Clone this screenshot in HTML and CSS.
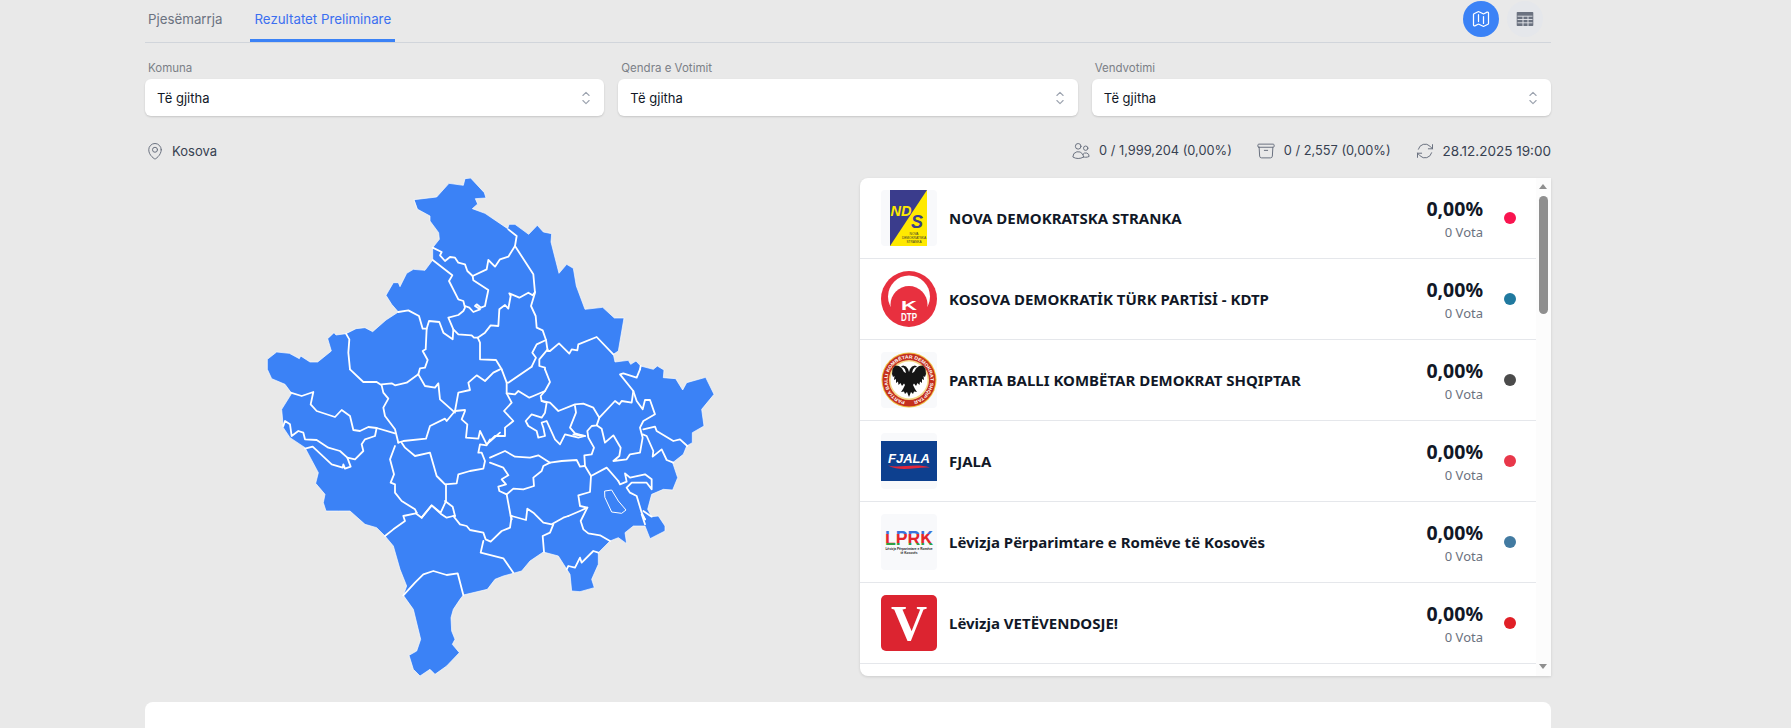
FILE: index.html
```html
<!DOCTYPE html>
<html lang="sq">
<head>
    <meta charset="UTF-8">
    <title>Rezultatet Preliminare</title>
    <link rel="stylesheet" href="styles.css">
</head>
<body>
    <div class="page">
        <div class="topbar">
            <div class="tabs">
                <div class="tab">Pjesëmarrja</div>
                <div class="tab active">Rezultatet Preliminare</div>
            </div>
            <div class="views">
                <div class="view-btn on">
                    <svg class="icon-20" viewBox="0 0 24 24"><path d="M9 6.75V15m6-6v8.25m.503 3.498 4.875-2.437c.381-.19.622-.58.622-1.006V4.82c0-.836-.88-1.38-1.628-1.006l-3.869 1.934c-.317.159-.69.159-1.006 0L9.503 3.252a1.125 1.125 0 0 0-1.006 0L3.622 5.689C3.24 5.88 3 6.27 3 6.695V19.18c0 .836.88 1.38 1.628 1.006l3.869-1.934c.317-.159.69-.159 1.006 0l4.994 2.497c.317.158.69.158 1.006 0Z"/></svg>
                </div>
                <div class="view-btn">
                    <svg class="icon-20" viewBox="0 0 20 20"><path class="solid" d="M2.5 3h15a.8.8 0 0 1 .8.8v12.4a.8.8 0 0 1-.8.8h-15a.8.8 0 0 1-.8-.8V3.800a.8.8 0 0 1 .8-.8Z"/><path class="cuts" d="M2.500 7.200h15M2.500 10.500h15M2.500 13.800h15M8 7.200V17M13 7.200V17"/></svg>
                </div>
            </div>
        </div>

        <div class="filters">
            <div class="filter">
                <label>Komuna</label>
                <div class="select">Të gjitha
                    <svg class="chevrons" viewBox="0 0 24 24"><path d="M8.250 15 12 18.750 15.750 15m-7.500-6L12 5.250 15.750 9"/></svg>
                </div>
            </div>
            <div class="filter">
                <label>Qendra e Votimit</label>
                <div class="select">Të gjitha
                    <svg class="chevrons" viewBox="0 0 24 24"><path d="M8.250 15 12 18.750 15.750 15m-7.500-6L12 5.250 15.750 9"/></svg>
                </div>
            </div>
            <div class="filter">
                <label>Vendvotimi</label>
                <div class="select">Të gjitha
                    <svg class="chevrons" viewBox="0 0 24 24"><path d="M8.250 15 12 18.750 15.750 15m-7.500-6L12 5.250 15.750 9"/></svg>
                </div>
            </div>
        </div>

        <div class="infobar">
            <div class="place">
                <svg class="icon-18" viewBox="0 0 24 24"><path d="M15 10.500a3 3 0 1 1-6 0 3 3 0 0 1 6 0Z"/><path d="M19.500 10.500c0 7.142-7.500 11.250-7.500 11.250S4.500 17.642 4.500 10.500a7.500 7.500 0 1 1 15 0Z"/></svg>
                Kosova
            </div>
            <div class="stats">
                <div class="stat">
                    <svg class="icon-18" viewBox="0 0 24 24"><path d="M15 19.128a9.380 9.380 0 0 0 2.625.372 9.337 9.337 0 0 0 4.121-.952 4.125 4.125 0 0 0-7.533-2.493M15 19.128v-.003c0-1.113-.285-2.160-.786-3.070M15 19.128v.106A12.318 12.318 0 0 1 8.624 21c-2.331 0-4.512-.645-6.374-1.766l-.001-.109a6.375 6.375 0 0 1 11.964-3.070M12 6.375a3.375 3.375 0 1 1-6.750 0 3.375 3.375 0 0 1 6.750 0Zm8.250 2.250a2.625 2.625 0 1 1-5.250 0 2.625 2.625 0 0 1 5.250 0Z"/></svg>
                    0 / 1,999,204 (0,00%)
                </div>
                <div class="stat">
                    <svg class="icon-18" viewBox="0 0 24 24"><path d="m20.250 7.500-.625 10.632a2.250 2.250 0 0 1-2.247 2.118H6.622a2.250 2.250 0 0 1-2.247-2.118L3.750 7.500M10 11.250h4M3.375 7.500h17.250c.621 0 1.125-.504 1.125-1.125v-1.500c0-.621-.504-1.125-1.125-1.125H3.375c-.621 0-1.125.504-1.125 1.125v1.500c0 .621.504 1.125 1.125 1.125Z"/></svg>
                    0 / 2,557 (0,00%)
                </div>
                <div class="stat date">
                    <svg class="icon-18" viewBox="0 0 24 24"><path d="M16.023 9.348h4.992v-.001M2.985 19.644v-4.992m0 0h4.992m-4.993 0 3.181 3.183a8.250 8.250 0 0 0 13.803-3.700M4.031 9.865a8.250 8.250 0 0 1 13.803-3.700l3.181 3.182m0-4.991v4.990"/></svg>
                    28.12.2025 19:00
                </div>
            </div>
        </div>

        <div class="content">
            <div class="map-cell">
                <svg class="map" viewBox="0 26 1440 1494">
                    <path class="land" d="M493 91L560 83L597 42L640 48L645 28L662 26L703 70L708 86L676 88L683 104L667 118L705 132L773 178L777 165L795 165L836 195L862 168L880 188L905 193L903 218L927 312L950 285L970 297L979 350L1005 420L1058 414L1093 446L1122 446L1105 545L1090 555L1095 578L1135 573L1142 585L1158 575L1172 590L1210 600L1222 590L1242 602L1240 625L1277 628L1298 662L1310 640L1367 624L1392 675L1355 720L1362 770L1327 790L1327 820L1310 830L1300 855L1268 880L1283 925L1268 962L1240 960L1205 975L1193 1020L1205 1042L1225 1040L1245 1070L1245 1085L1200 1108L1185 1070L1150 1070L1125 1090L1130 1123L1105 1105L1080 1115L1045 1150L1045 1185L1025 1230L1033 1255L990 1267L965 1265L960 1215L925 1160L880 1148L840 1175L815 1205L760 1220L735 1230L712 1260L640 1277L630 1290L610 1320L603 1345L605 1385L615 1410L607 1425L628 1450L590 1490L555 1515L540 1500L510 1520L490 1500L477 1458L500 1445L512 1410L490 1320L460 1278L470 1250L450 1200L430 1130L405 1100L380 1075L345 1065L300 1025L265 1025L228 1025L220 1000L225 975L197 942L205 910L165 835L120 805L100 775L95 720L125 672L105 645L65 628L52 600L52 570L80 548L118 552L148 568L152 560L180 578L203 578L244 545L233 508L252 490L258 497L288 493L318 478L345 475L368 487L408 452L445 428L425 405L408 378L430 340L445 340L450 352L470 312L490 300L525 303L548 272L548 235L568 210L566 190L540 155L540 140L503 120Z"/>
                    <g class="borders">
                        <polyline points="548,235 575,248 570,258 585,275 600,263 615,265 625,280 645,285 652,305 668,320 710,300 715,272 735,292 750,270 775,262 795,230 800,200 775,180"/>
                        <polyline points="795,230 850,315 855,370 843,410 857,440 860,475 878,483 888,512 893,545 900,545 927,522 958,553 965,540 982,543 985,525 1040,503 1090,555"/>
                        <polyline points="445,428 475,423 507,440 518,478 530,478 537,455 568,458 580,490 608,510 610,480 595,445 625,437 640,425 645,415 640,395 625,390 597,335 607,318 548,272"/>
                        <polyline points="668,320 670,333 715,362 708,395 705,410 693,415 680,405 675,410 690,420 670,428 658,415 645,410"/>
                        <polyline points="610,480 625,495 665,498 672,505 683,505 705,490 722,468 745,470 748,420 765,407 775,418 782,380 778,372 808,385 835,370 848,378 855,368"/>
                        <polyline points="683,505 690,520 690,570 738,572 755,600"/>
                        <polyline points="845,592 858,565 847,550 860,525 888,512"/>
                        <polyline points="885,600 885,595 868,590 868,570 893,540"/>
                        <polyline points="530,478 527,540 518,545 533,572 525,595 510,597 505,615"/>
                        <polyline points="288,493 298,510 295,550 300,600"/>
                        <polyline points="1170,600 1172,590"/>
                    </g>
                    <g class="borders" transform="translate(30 600)">
                        <polyline points="92,70 125,80 160,68 152,105 170,125 225,143 245,122 270,140 280,182 300,185 325,173 350,176 405,192"/>
                        <polyline points="350,176 345,200 315,210 305,225 310,245 285,270 262,265 240,245 205,235 170,212 135,210 130,190 115,185 95,200 90,165 75,155 70,170"/>
                        <polyline points="135,238 158,232 215,285 248,295 250,285 255,298 272,292 262,265"/>
                        <polyline points="270,0 310,38 350,38 365,48 370,70 385,88 370,115 375,140 405,180 415,220"/>
                        <polyline points="365,45 395,42 405,48 440,40 475,15 495,50 525,55 535,42 540,90 585,130"/>
                        <polyline points="415,220 430,215 498,208 510,170 555,148 560,155 585,125 615,122"/>
                        <polyline points="425,220 435,235 465,260 510,250 530,320 545,335 555,345 590,342 595,315 630,305 670,298 675,275 665,250 655,250 660,225 680,228 690,210"/>
                        <polyline points="405,230 390,270 402,315 392,340 405,345 405,370 425,395 465,420 470,430"/>
                        <polyline points="558,345 558,395 542,430 515,408 485,445"/>
                        <polyline points="555,395 578,412 585,440"/>
                        <polyline points="585,125 595,70 630,62 625,40 650,18 675,35 700,10 720,0"/>
                        <polyline points="615,125 605,150 622,165 618,205 655,208 660,185 680,225 720,190"/>
                    </g>
                    <g class="borders" transform="translate(720 600)">
                        <polyline points="35,0 50,40 55,40 125,-8"/>
                        <polyline points="165,0 180,38 165,65 130,80 118,85 85,65 75,75 50,72"/>
                        <polyline points="50,40 50,72 65,100 42,125 70,155 45,175 45,200 15,200 0,215"/>
                        <polyline points="165,65 152,80 155,95 170,100 165,130 155,145 125,135 107,155 115,170 140,185 145,205 165,200 160,175 155,160 170,155 195,210 210,225 225,195 265,205 285,200 250,195"/>
                        <polyline points="155,95 180,100 205,125 255,105 280,103 310,115 328,145 375,95 388,105 395,95 425,100 430,65 390,15 400,12 440,25 450,0"/>
                        <polyline points="255,110 258,130 240,175 255,192 285,200"/>
                        <polyline points="328,145 320,168 305,170 292,185 295,205 312,235 305,255 283,258 285,290 303,320 350,295 385,335"/>
                        <polyline points="320,168 335,178 345,220 370,198 392,235 388,260 370,275 410,270 420,255 450,250 458,205 450,175 460,155 495,135 480,92 465,92 458,120 440,95 430,65"/>
                        <polyline points="458,195 470,200 490,245 488,262 515,240 530,272 550,280"/>
                        <polyline points="460,180 495,172 500,185 550,215 570,210 592,230"/>
                        <polyline points="0,265 45,245 75,262 120,265 145,258 180,280 215,275 260,272 270,292 283,290"/>
                        <polyline points="180,280 160,290 155,305 130,325 132,350 100,360 70,358 50,375 28,365 25,352 48,345 35,330 55,318 40,295 0,280"/>
                        <polyline points="50,375 62,440 65,450"/>
                        <polyline points="303,320 300,368 265,378 270,410 292,415 270,425 235,440"/>
                        <polyline points="385,335 390,345 410,337 405,312 420,325 465,315 485,330 485,360 470,340 425,340 410,355 420,370 440,380 455,430 465,450"/>
                        <polygon class="thin" points="345,365 365,362 385,395 408,422 395,432 365,428 345,385"/>
                    </g>
                    <g class="borders" transform="translate(0 720)">
                        <polyline points="500,310 497,312 460,320 465,335 430,360 405,380"/>
                        <polyline points="515,325 497,312"/>
                        <polyline points="515,325 545,288 572,313 590,325 610,320 615,320"/>
                        <polyline points="610,320 630,345 650,350 660,362 700,370 707,390 722,397 755,365 780,355 785,320 782,320"/>
                        <polyline points="785,320 828,332 832,298 850,310 880,340 905,345 940,325 955,320"/>
                        <polyline points="910,345 900,370 878,380 882,428"/>
                        <polyline points="700,395 692,430 760,447 790,490"/>
                        <polyline points="950,480 955,470 975,475 990,445 995,460 1030,425 1045,430"/>
                        <polyline points="460,558 495,520 520,495 550,485 590,497 623,492 640,557"/>
                        <polyline points="1012,295 992,335 1000,360 1015,372 1050,378 1080,395"/>
                        <polyline points="1185,330 1175,315 1185,345"/>
                        <polyline points="1180,305 1205,322"/>
                    </g>
                </svg>
            </div>

            <div class="panel">
                <div class="list">
                    <div class="row">
                        <svg class="logo" viewBox="0 0 56 56">
                            <rect width="56" height="56" rx="4" fill="#f8f9fb"/>
                            <rect x="9" width="37" height="56" fill="#ffe900"/>
                            <polygon points="9,0 46,0 9,56" fill="#3a3c8c"/>
                            <text x="9.500" y="26" class="nds-y">ND</text>
                            <text x="30" y="38" class="nds-b">S</text>
                            <text x="33" y="45" class="nds-s">NOVA</text>
                            <text x="33" y="49" class="nds-s">DEMOKRATSKA</text>
                            <text x="33" y="53" class="nds-s">STRANKA</text>
                        </svg>
                        <div class="name">NOVA DEMOKRATSKA STRANKA</div>
                        <div class="score"><b>0,00%</b><span>0 Vota</span></div>
                        <i class="dot dot-1"></i>
                    </div>
                    <div class="row">
                        <svg class="logo" viewBox="0 0 56 56">
                            <circle cx="28" cy="28" r="28" fill="#e8303f"/>
                            <circle cx="28" cy="25.500" r="21" fill="#fff"/>
                            <circle cx="28" cy="33.500" r="18.500" fill="#e8303f"/>
                            <text x="20" y="39" class="kdtp-k" textLength="16" lengthAdjust="spacingAndGlyphs">K</text>
                            <text x="20" y="49.500" class="kdtp-d" textLength="16" lengthAdjust="spacingAndGlyphs">DTP</text>
                        </svg>
                        <div class="name">KOSOVA DEMOKRATİK TÜRK PARTİSİ - KDTP</div>
                        <div class="score"><b>0,00%</b><span>0 Vota</span></div>
                        <i class="dot dot-2"></i>
                    </div>
                    <div class="row">
                        <svg class="logo" viewBox="0 0 56 56">
                            <rect width="56" height="56" rx="4" fill="#f8f9fb"/>
                            <circle cx="28" cy="28" r="27.500" fill="#f1c040"/>
                            <circle cx="28" cy="28" r="26.500" fill="#c4301f"/>
                            <circle cx="28" cy="28" r="20" fill="#f4d98a"/>
                            <circle cx="28" cy="28" r="18.500" fill="#fff"/>
                            <path id="bkdRing" d="M28 49.500a21.500 21.500 0 1 1 .01 0" fill="none"/>
                            <text class="bkd-ring"><textPath href="#bkdRing" startOffset="4" textLength="126" lengthAdjust="spacingAndGlyphs">PARTIA BALLI KOMBËTAR DEMOKRAT SHQIPTAR</textPath></text>
                            <path id="eagleHalf" fill="#151515" d="M28 20L29 17L31 14.500L34 13.500L36.500 15L33.500 15.500L32 17.500L31 21L33 20L35 16.500L38 14L42 13.500L44.500 17L45 22L44 25L42.500 24L43 28L41 27L41 31L39 29.500L38.500 33L36.500 31L35 34L33 31.500L32 33L34 37L36 40L33 39.500L32 42L30 40L28 45Z"/>
                            <use href="#eagleHalf" transform="matrix(-1 0 0 1 56 0)"/>
                        </svg>
                        <div class="name">PARTIA BALLI KOMBËTAR DEMOKRAT SHQIPTAR</div>
                        <div class="score"><b>0,00%</b><span>0 Vota</span></div>
                        <i class="dot dot-3"></i>
                    </div>
                    <div class="row">
                        <svg class="logo" viewBox="0 0 56 56">
                            <rect width="56" height="56" rx="4" fill="#f8f9fb"/>
                            <rect y="8" width="56" height="40" fill="#0d408f"/>
                            <text x="7" y="30" class="fjala" textLength="42" lengthAdjust="spacingAndGlyphs">FJALA</text>
                            <path d="M7 32.500c12 3 28-3 42 2-14-1-28 5-42-2Z" fill="#e2263a"/>
                        </svg>
                        <div class="name">FJALA</div>
                        <div class="score"><b>0,00%</b><span>0 Vota</span></div>
                        <i class="dot dot-4"></i>
                    </div>
                    <div class="row">
                        <svg class="logo" viewBox="0 0 56 56">
                            <defs>
                                <linearGradient id="lprkFill" x1="0" y1="0" x2="0" y2="1">
                                    <stop offset="0.350" stop-color="#3b72d9"/>
                                    <stop offset="0.350" stop-color="#e3262c"/>
                                    <stop offset="0.720" stop-color="#e3262c"/>
                                    <stop offset="0.720" stop-color="#2f9e44"/>
                                </linearGradient>
                            </defs>
                            <rect width="56" height="56" rx="4" fill="#f8f9fb"/>
                            <text x="4" y="31" class="lprk" textLength="48" lengthAdjust="spacingAndGlyphs">LPRK</text>
                            <text x="28" y="36" class="lprk-s">Lëvizja Përparimtare e Romëve</text>
                            <text x="28" y="40" class="lprk-s">të Kosovës</text>
                        </svg>
                        <div class="name">Lëvizja Përparimtare e Romëve të Kosovës</div>
                        <div class="score"><b>0,00%</b><span>0 Vota</span></div>
                        <i class="dot dot-5"></i>
                    </div>
                    <div class="row">
                        <svg class="logo" viewBox="0 0 56 56">
                            <rect width="56" height="56" rx="5" fill="#dc2430"/>
                            <text x="28" y="45" class="vv">V</text>
                        </svg>
                        <div class="name">Lëvizja VETËVENDOSJE!</div>
                        <div class="score"><b>0,00%</b><span>0 Vota</span></div>
                        <i class="dot dot-6"></i>
                    </div>
                </div>
                <div class="scrollbar">
                    <i class="arrow up"></i>
                    <div class="thumb"></div>
                    <i class="arrow down"></i>
                </div>
            </div>
        </div>

        <div class="bottom-card"></div>
    </div>
</body>
</html>
```

FILE: styles.css
```css
* {
    box-sizing: border-box;
}
html, body {
    height: 728px;
    overflow: hidden;
}
body {
    margin: 0;
    background: #e9e9e9;
    color: #111827;
    font-family: Inter, "Liberation Sans", sans-serif;
}
svg {
    display: block;
    flex: none;
    fill: none;
    stroke: currentColor;
    stroke-width: 1.5;
    stroke-linecap: round;
    stroke-linejoin: round;
}
.page {
    padding: 0 240px 0 145px;
}

/* tabs */
.topbar {
    display: flex;
    justify-content: space-between;
    height: 43px;
    border-bottom: 1px solid #d1d5db;
}
.tabs {
    display: flex;
    gap: 28px;
}
.tab {
    height: 42px;
    padding: 9px 0 0 3px;
    font-size: 13.3px;
    line-height: 20px;
    color: #6b7280;
}
.tab.active {
    padding: 9px 4px 0;
    color: #3b6ff0;
    border-bottom: 3px solid #3b82f6;
}
.views {
    display: flex;
    gap: 8px;
    padding: 1px 8px 0 0;
}
.view-btn {
    display: flex;
    align-items: center;
    justify-content: center;
    width: 36px;
    height: 36px;
    border-radius: 50%;
    background: #e5e7eb;
    color: #6b7280;
}
.view-btn.on {
    background: #3b82f6;
    color: #fff;
}
.icon-20 {
    width: 20px;
    height: 20px;
}
.icon-18 {
    width: 20px;
    height: 20px;
    color: #6b7280;
    stroke-width: 1.2;
}
.solid {
    fill: #6b7280;
    stroke: none;
}
.cuts {
    stroke: #e5e7eb;
    stroke-width: 0.9;
    stroke-linecap: butt;
}

/* filters */
.filters {
    display: grid;
    grid-template-columns: repeat(3, 1fr);
    gap: 14px;
    padding-top: 17px;
}
.filter label {
    display: block;
    height: 19px;
    padding-left: 3px;
    font-size: 11.5px;
    line-height: 16px;
    color: #7b8087;
}
.select {
    display: flex;
    align-items: center;
    justify-content: space-between;
    height: 37px;
    padding: 0 8px 0 12px;
    background: #fff;
    border-radius: 6px;
    box-shadow: 0 1px 2px rgba(0, 0, 0, 0.15);
    font-size: 13px;
    color: #111827;
}
.chevrons {
    width: 20px;
    height: 20px;
    color: #9ca3af;
    stroke-width: 1.3;
}

/* location + counters */
.infobar {
    display: flex;
    align-items: center;
    justify-content: space-between;
    height: 62px;
    padding-top: 7px;
    font-size: 12.8px;
    color: #374151;
}
.place, .stat {
    display: flex;
    align-items: center;
    gap: 8px;
}
.place {
    gap: 7px;
    font-size: 13px;
}
.stats {
    display: flex;
    gap: 24px;
}
.stat.date {
    font-size: 13.5px;
}

/* map + list */
.content {
    display: flex;
    gap: 14px;
}
.map-cell {
    width: 701px;
    padding-left: 105px;
}
.map {
    width: 480px;
    height: 498px;
    stroke: none;
}
.land {
    fill: #3b82f6;
    stroke: #fff;
    stroke-width: 2;
}
.borders polyline, .borders polygon {
    fill: none;
    stroke: #fff;
    stroke-width: 5.4;
}
.borders .thin {
    stroke-width: 3;
}
.panel {
    display: flex;
    flex: 1;
    height: 498px;
    background: #fff;
    border-radius: 8px 0 0 8px;
    box-shadow: 0 1px 3px rgba(0, 0, 0, 0.12);
    overflow: hidden;
}
.list {
    flex: 1;
}
.row {
    display: flex;
    align-items: center;
    height: 81px;
    padding: 0 20px 0 21px;
    border-bottom: 1px solid #e5e7eb;
}
.logo {
    width: 56px;
    height: 56px;
    stroke: none;
}
.name {
    flex: 1;
    margin-left: 12px;
    font-family: "Noto Sans", sans-serif;
    font-size: 15px;
    font-weight: 700;
    color: #111827;
}
.score {
    display: flex;
    flex-direction: column;
    align-items: flex-end;
    font-family: "Noto Sans", sans-serif;
}
.score b {
    font-size: 19.5px;
    font-weight: 700;
    line-height: 26px;
    color: #111827;
}
.score span {
    margin-top: 1px;
    font-size: 13px;
    line-height: 18px;
    color: #6b7280;
}
.dot {
    width: 12px;
    height: 12px;
    margin-left: 21px;
    border-radius: 50%;
}
.dot-1 { background: #f9144f; }
.dot-2 { background: #20799f; }
.dot-3 { background: #4b4b4b; }
.dot-4 { background: #e8374a; }
.dot-5 { background: #427aa1; }
.dot-6 { background: #e01f26; }

/* scrollbar */
.scrollbar {
    position: relative;
    width: 15px;
    background: #fcfcfc;
}
.thumb {
    position: absolute;
    top: 18px;
    left: 3px;
    width: 9px;
    height: 118px;
    border-radius: 5px;
    background: #8f8f8f;
}
.arrow {
    position: absolute;
    left: 3px;
    border-left: 4.5px solid transparent;
    border-right: 4.5px solid transparent;
}
.arrow.up {
    top: 6px;
    border-bottom: 5px solid #8f8f8f;
}
.arrow.down {
    bottom: 7px;
    border-top: 5px solid #8f8f8f;
}

.bottom-card {
    height: 26px;
    margin-top: 26px;
    background: #fff;
    border-radius: 8px 8px 0 0;
}

/* text inside party logos */
.nds-y, .nds-b, .nds-s, .kdtp-k, .kdtp-d, .bkd-ring, .fjala, .lprk, .lprk-s, .vv {
    stroke: none;
    font-family: "Liberation Sans", sans-serif;
}
.nds-y {
    fill: #ffe900;
    font-size: 14.500px;
    font-weight: 700;
    font-style: italic;
}
.nds-b {
    fill: #3a3c8c;
    font-size: 18px;
    font-weight: 700;
    font-style: italic;
}
.nds-s {
    fill: #333;
    font-size: 3.200px;
    text-anchor: middle;
}
.kdtp-k {
    fill: #fff;
    font-size: 12px;
    font-weight: 700;
}
.kdtp-d {
    fill: #fff;
    font-size: 10px;
    font-weight: 700;
}
.bkd-ring {
    fill: #fff;
    font-size: 4.600px;
    font-weight: 700;
}
.fjala {
    fill: #fff;
    font-size: 12.500px;
    font-weight: 700;
    font-style: italic;
}
.lprk {
    fill: url(#lprkFill);
    font-size: 21px;
    font-weight: 700;
}
.lprk-s {
    fill: #222;
    font-size: 3.200px;
    font-weight: 700;
    text-anchor: middle;
}
.vv {
    fill: #fff;
    font-family: "Liberation Serif", serif;
    font-size: 50px;
    font-weight: 700;
    text-anchor: middle;
}
```
